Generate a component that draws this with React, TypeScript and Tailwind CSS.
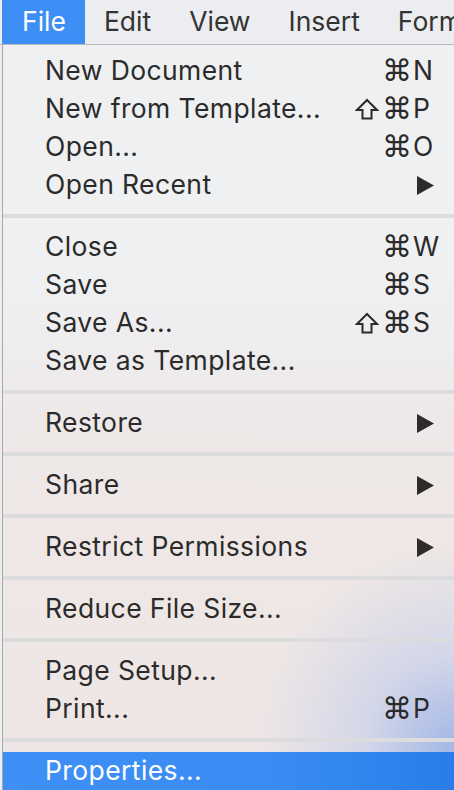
import React from 'react';

type Item =
  | { kind: 'item'; label: string; shift?: boolean; keyName?: string; sub?: boolean; active?: boolean }
  | { kind: 'sep' };

const items: Item[] = [
  { kind: 'item', label: 'New Document', keyName: 'N' },
  { kind: 'item', label: 'New from Template...', shift: true, keyName: 'P' },
  { kind: 'item', label: 'Open...', keyName: 'O' },
  { kind: 'item', label: 'Open Recent', sub: true },
  { kind: 'sep' },
  { kind: 'item', label: 'Close', keyName: 'W' },
  { kind: 'item', label: 'Save', keyName: 'S' },
  { kind: 'item', label: 'Save As...', shift: true, keyName: 'S' },
  { kind: 'item', label: 'Save as Template...' },
  { kind: 'sep' },
  { kind: 'item', label: 'Restore', sub: true },
  { kind: 'sep' },
  { kind: 'item', label: 'Share', sub: true },
  { kind: 'sep' },
  { kind: 'item', label: 'Restrict Permissions', sub: true },
  { kind: 'sep' },
  { kind: 'item', label: 'Reduce File Size...' },
  { kind: 'sep' },
  { kind: 'item', label: 'Page Setup...' },
  { kind: 'item', label: 'Print...', keyName: 'P' },
  { kind: 'sep' },
  { kind: 'item', label: 'Properties...', active: true },
];

const menus = ['File', 'Edit', 'View', 'Insert', 'Format'];

const Arrow = () => (
  <svg width="17" height="19" viewBox="0 0 17 19" className="block">
    <polygon points="0,0 17,9.5 0,19" fill="#2e2b2b" />
  </svg>
);

// outlined shift arrow
const Shift = () => (
  <svg width="24" height="22" viewBox="0 0 24 22" className="block mr-[3px]">
    <path d="M12 2 L22 12 L16.5 12 L16.5 20.5 L7.5 20.5 L7.5 12 L2 12 Z" fill="none" stroke="#2b2b2b" strokeWidth="2" strokeLinejoin="miter" />
  </svg>
);

const App = () => {
  return (
    <div className="w-[454px] h-[790px] overflow-hidden bg-[#eceef0] font-['Inter','DejaVu_Sans',sans-serif] text-[26.5px] tracking-[0.4px] text-[#2b2b2b]">
      {/* menu bar */}
      <div className="h-[45px] flex border-b border-[#b8b8ba] bg-[#ebedf0] whitespace-nowrap tracking-normal">
        {menus.map((m, i) => (
          <div
            key={m}
            className={
              i === 0
                ? 'ml-[2px] pl-[20px] pr-[19px] flex items-center bg-[#3d8ef5] text-white'
                : 'px-[19px] flex items-center text-[#333]'
            }
          >
            {m}
          </div>
        ))}
      </div>

      {/* dropdown */}
      <div className="ml-[2px] h-[745px] border-l border-[#a8a8aa] pt-[7px] bg-[radial-gradient(circle_200px_at_100%_94%,rgba(150,175,230,0.85),rgba(180,196,236,0.45)_45%,transparent_100%),linear-gradient(180deg,#eff0f2_0%,#eff0f2_32%,#eee8e8_52%,#efe7e5_75%,#eee6e6_100%)]">
        {items.map((it, i) =>
          it.kind === 'sep' ? (
            <div key={i} className="my-[10px] h-[4px] bg-[#dcdbdd]" />
          ) : (
            <div
              key={i}
              className={
                it.active
                  ? 'h-[38px] flex items-center pl-[42px] pr-[20px] text-white bg-[linear-gradient(90deg,#3e90f6,#3a8cf4_60%,#2a7de8)]'
                  : 'h-[38px] flex items-center pl-[42px] pr-[20px]'
              }
            >
              <span className="flex-1 whitespace-nowrap">{it.label}</span>
              {it.keyName && (
                <span className="flex items-center">
                  {it.shift && <Shift />}
                  <span className="font-['DejaVu_Sans',sans-serif] text-[30px] leading-none tracking-normal">⌘</span>
                  <span className="w-[21px] ml-[1px] tracking-normal">{it.keyName}</span>
                </span>
              )}
              {it.sub && <Arrow />}
            </div>
          )
        )}
      </div>
    </div>
  );
};

export default App;
